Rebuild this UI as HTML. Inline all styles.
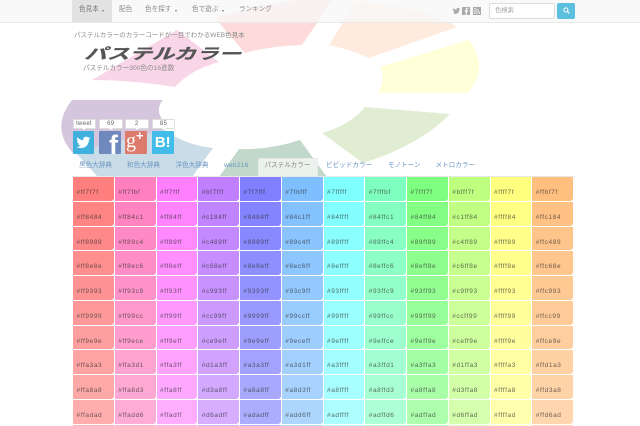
<!DOCTYPE html>
<html lang="ja"><head><meta charset="utf-8"><title>パステルカラー</title>
<style>
html,body{margin:0;padding:0;width:640px;height:426px;overflow:hidden;background:#fff}
body{position:relative;font-family:"Liberation Sans","Noto Sans CJK JP",sans-serif;color:#888}
#wrap{position:absolute;left:0;top:0;width:640px;height:426px;overflow:hidden;filter:blur(.3px)}
.a{position:absolute;white-space:nowrap;line-height:1}
#nav{position:absolute;left:0;top:0;width:640px;height:22px;background:rgba(248,248,248,.8);border-bottom:1px solid #e9e9e9}
#act{position:absolute;left:72px;top:0;width:40px;height:22px;background:#e2e2e2}
.n{font-size:6.6px;top:7px;color:#8a8a8a}
.car{position:absolute;top:10px;width:0;height:0;border:1.6px solid transparent;border-top:2px solid #777;border-bottom:0}
.b{position:absolute;top:119px;height:8px;background:#fff;border:.5px solid #ddd;border-radius:1px;font-size:6px;line-height:8px;text-align:center;color:#666;letter-spacing:.3px}
.b:after{content:"";position:absolute;left:50%;margin-left:-2px;bottom:-2px;border:2px solid transparent;border-top-color:#fff;border-bottom:0}
.s{position:absolute;top:131px;height:22.5px;border-radius:1px;color:#fff;text-align:center;overflow:hidden}
.t{font-size:6.6px;top:163px;color:#6d97c4}
#tab{position:absolute;left:258px;top:158px;width:60px;height:18px;background:rgba(240,244,240,.9);border:1px solid #e8e8e8;border-bottom:0;border-radius:2px 2px 0 0;box-sizing:border-box}
#line{position:absolute;left:73px;top:176px;width:501.5px;height:1px;background:#e8e8e8}
#g{position:absolute;left:73px;top:177px;height:249px;overflow:hidden;display:grid;grid-template-columns:repeat(12,41.75px);grid-auto-rows:24.75px}
#g i{display:block;position:relative;margin:0 1px 1px 0;font-style:normal;font-size:6.5px;letter-spacing:.6px;line-height:7px;padding:12px 0 0 3.5px;color:rgba(50,50,50,.72);overflow:hidden;box-sizing:border-box}
#g i:after{content:"";position:absolute;right:0;bottom:0;border-style:solid;border-width:0 0 2px 2px;border-color:transparent transparent #fff transparent}
</style></head><body>
<div id="wrap">
<svg class="bg" width="640" height="180" viewBox="0 0 640 180" style="position:absolute;left:0;top:0">
<path fill="#fddbdb" d="M215 18Q270 0 335 -3L302 45Q270 46 245 53Z"/>
<path fill="#ffebdd" d="M329 45L355 3Q420 5 457 27L369 58Q352 50 329 45Z"/>
<path fill="#ffffd8" d="M380 67L469 40Q490 70 467 93L378 93Q386 80 380 67Z"/>
<path fill="#e1edd2" d="M365 107L450 114Q420 145 363 163L322 133Q350 125 365 107Z"/>
<path fill="#c2d8ca" d="M239 149Q270 150 300 140L327 177L219 177Z"/>
<path fill="#cadce7" d="M73 150L98 177L192 177L213 148Q185 145 165 130L120 130Z"/>
<path fill="#d5c6dd" d="M72 100L163 100Q152 112 170 128L73 153Q50 128 72 100Z"/>
<path fill="#f9d5e8" d="M92 80L177 30L219 62Q190 70 175 87Q130 80 92 80Z"/>
</svg>
<div id="nav"></div><div id="act"></div>
<div class="a n" style="left:79px;color:#777">色見本</div><span class="car" style="left:102px"></span>
<div class="a n" style="left:119px">配色</div>
<div class="a n" style="left:145px">色を探す</div><span class="car" style="left:175px"></span>
<div class="a n" style="left:192px">色で遊ぶ</div><span class="car" style="left:222px"></span>
<div class="a n" style="left:239px">ランキング</div>
<svg width="9" height="8" viewBox="0 0 24 24" style="position:absolute;left:452px;top:7px"><path fill="#aaa" d="M23 4.9c-.8.4-1.7.6-2.6.7.9-.6 1.6-1.4 2-2.5-.9.5-1.9.9-2.9 1.1A4.6 4.6 0 0 0 11.6 8.4 13 13 0 0 1 2.2 3.6a4.6 4.6 0 0 0 1.4 6.1c-.7 0-1.4-.2-2-.6 0 2.2 1.6 4.1 3.7 4.6-.7.2-1.4.2-2.1.1.6 1.9 2.3 3.2 4.3 3.2A9.2 9.2 0 0 1 .7 18.9 13 13 0 0 0 7.7 21c8.5 0 13.3-7.2 13-13.6.9-.7 1.7-1.5 2.3-2.5z"/></svg>
<svg width="8" height="8" viewBox="0 0 8 8" style="position:absolute;left:462px;top:7px"><rect width="8" height="8" fill="#aaa"/><path fill="#f8f8f8" d="M5 8V4.6h1.1l.2-1.3H5v-.8c0-.4.1-.6.6-.6h.7V.8C6 .8 5.700 .7 5.300 .7 4.300 .7 3.700 1.300 3.700 2.300v1H2.600v1.300h1.100V8z"/></svg>
<svg width="8" height="8" viewBox="0 0 8 8" style="position:absolute;left:473px;top:7px"><rect width="8" height="8" fill="#aaa"/><circle cx="1.800" cy="6.200" r=".8" fill="#f8f8f8"/><path fill="none" stroke="#f8f8f8" stroke-width=".8" d="M1 3.700A3.300 3.300 0 0 1 4.300 7M1 1.600A5.400 5.400 0 0 1 6.400 7"/></svg>
<div style="position:absolute;left:489px;top:3px;width:66px;height:15.500px;background:#fff;border:.5px solid #ddd;border-radius:2px;box-sizing:border-box"></div>
<div class="a" style="left:495px;top:7.500px;font-size:6.300px;color:#a5a5a5">色検索</div>
<div style="position:absolute;left:557px;top:3px;width:18px;height:15.500px;background:#5bc0de;border-radius:2px"></div>
<svg width="7" height="7" viewBox="0 0 7 7" style="position:absolute;left:562.500px;top:7px"><circle cx="2.900" cy="2.900" r="2" fill="none" stroke="#fff" stroke-width="1"/><path d="M4.400 4.400L6.300 6.300" stroke="#fff" stroke-width="1.200"/></svg>
<div class="a" style="left:74px;top:33px;font-size:6.500px;color:#8c8c8c">パステルカラーのカラーコードが一目でわかるWEB色見本</div>
<div class="a" style="left:83px;top:47px;font-size:15px;font-weight:700;color:#555;-webkit-text-stroke:.3px #555;transform-origin:0 100%;transform:skewX(-22deg) scale(1.500,1)">パステルカラー</div>
<div class="a" style="left:83px;top:65.500px;font-size:6.650px;color:#8c8c8c">パステルカラー300色の16進数</div>
<div class="b" style="left:72.500px;width:21px">tweet</div>
<div class="b" style="left:99px;width:21.500px">69</div>
<div class="b" style="left:125px;width:21.500px">2</div>
<div class="b" style="left:152px;width:21px">85</div>
<div class="s" style="left:72.500px;width:21.500px;background:#3fb1dc"><svg width="15" height="15" viewBox="0 0 24 24" style="margin-top:4px"><path fill="#fff" d="M23 4.900c-.8.400-1.700.600-2.600.700.900-.600 1.600-1.400 2-2.500-.9.500-1.900.900-2.900 1.100A4.600 4.600 0 0 0 11.600 8.400 13 13 0 0 1 2.200 3.600a4.600 4.600 0 0 0 1.400 6.100c-.7 0-1.400-.2-2-.6 0 2.200 1.600 4.100 3.700 4.600-.7.200-1.400.2-2.100.1.600 1.900 2.300 3.200 4.300 3.200A9.200 9.200 0 0 1 .7 18.900 13 13 0 0 0 7.700 21c8.500 0 13.300-7.200 13-13.600.9-.7 1.700-1.500 2.300-2.500z"/></svg></div>
<div class="s" style="left:99px;width:22px;background:#6f88bd;font:700 27px/29px 'Liberation Sans',sans-serif;text-indent:7px">f</div>
<div class="s" style="left:125px;width:22px;background:#dc7a6b;text-align:left"><span style="position:absolute;left:1px;top:0;font:400 20px/20px 'Liberation Serif',serif">g</span><span style="position:absolute;left:11px;top:-2px;font:700 13px/13px 'Liberation Sans',sans-serif">+</span></div>
<div class="s" style="left:152px;width:21.500px;background:#42bdea;font:700 15px/23px 'Liberation Sans',sans-serif">B!</div>
<div id="tab"></div>
<div class="a t" style="left:79px">黒色大辞典</div>
<div class="a t" style="left:127px">和色大辞典</div>
<div class="a t" style="left:175.500px">洋色大辞典</div>
<div class="a t" style="left:224px;letter-spacing:.25px">web216</div>
<div class="a t" style="left:264.500px;color:#888">パステルカラー</div>
<div class="a t" style="left:326px">ビビッドカラー</div>
<div class="a t" style="left:388px">モノトーン</div>
<div class="a t" style="left:435.500px">メトロカラー</div>
<div id="line"></div>
<div id="g">
<i style="background:#ff7f7f">#ff7f7f</i><i style="background:#ff7fbf">#ff7fbf</i><i style="background:#ff7fff">#ff7fff</i><i style="background:#bf7fff">#bf7fff</i><i style="background:#7f7fff">#7f7fff</i><i style="background:#7fbfff">#7fbfff</i><i style="background:#7fffff">#7fffff</i><i style="background:#7fffbf">#7fffbf</i><i style="background:#7fff7f">#7fff7f</i><i style="background:#bfff7f">#bfff7f</i><i style="background:#ffff7f">#ffff7f</i><i style="background:#ffbf7f">#ffbf7f</i>
<i style="background:#ff8484">#ff8484</i><i style="background:#ff84c1">#ff84c1</i><i style="background:#ff84ff">#ff84ff</i><i style="background:#c184ff">#c184ff</i><i style="background:#8484ff">#8484ff</i><i style="background:#84c1ff">#84c1ff</i><i style="background:#84ffff">#84ffff</i><i style="background:#84ffc1">#84ffc1</i><i style="background:#84ff84">#84ff84</i><i style="background:#c1ff84">#c1ff84</i><i style="background:#ffff84">#ffff84</i><i style="background:#ffc184">#ffc184</i>
<i style="background:#ff8989">#ff8989</i><i style="background:#ff89c4">#ff89c4</i><i style="background:#ff89ff">#ff89ff</i><i style="background:#c489ff">#c489ff</i><i style="background:#8989ff">#8989ff</i><i style="background:#89c4ff">#89c4ff</i><i style="background:#89ffff">#89ffff</i><i style="background:#89ffc4">#89ffc4</i><i style="background:#89ff89">#89ff89</i><i style="background:#c4ff89">#c4ff89</i><i style="background:#ffff89">#ffff89</i><i style="background:#ffc489">#ffc489</i>
<i style="background:#ff8e8e">#ff8e8e</i><i style="background:#ff8ec6">#ff8ec6</i><i style="background:#ff8eff">#ff8eff</i><i style="background:#c68eff">#c68eff</i><i style="background:#8e8eff">#8e8eff</i><i style="background:#8ec6ff">#8ec6ff</i><i style="background:#8effff">#8effff</i><i style="background:#8effc6">#8effc6</i><i style="background:#8eff8e">#8eff8e</i><i style="background:#c6ff8e">#c6ff8e</i><i style="background:#ffff8e">#ffff8e</i><i style="background:#ffc68e">#ffc68e</i>
<i style="background:#ff9393">#ff9393</i><i style="background:#ff93c9">#ff93c9</i><i style="background:#ff93ff">#ff93ff</i><i style="background:#c993ff">#c993ff</i><i style="background:#9393ff">#9393ff</i><i style="background:#93c9ff">#93c9ff</i><i style="background:#93ffff">#93ffff</i><i style="background:#93ffc9">#93ffc9</i><i style="background:#93ff93">#93ff93</i><i style="background:#c9ff93">#c9ff93</i><i style="background:#ffff93">#ffff93</i><i style="background:#ffc993">#ffc993</i>
<i style="background:#ff9999">#ff9999</i><i style="background:#ff99cc">#ff99cc</i><i style="background:#ff99ff">#ff99ff</i><i style="background:#cc99ff">#cc99ff</i><i style="background:#9999ff">#9999ff</i><i style="background:#99ccff">#99ccff</i><i style="background:#99ffff">#99ffff</i><i style="background:#99ffcc">#99ffcc</i><i style="background:#99ff99">#99ff99</i><i style="background:#ccff99">#ccff99</i><i style="background:#ffff99">#ffff99</i><i style="background:#ffcc99">#ffcc99</i>
<i style="background:#ff9e9e">#ff9e9e</i><i style="background:#ff9ece">#ff9ece</i><i style="background:#ff9eff">#ff9eff</i><i style="background:#ce9eff">#ce9eff</i><i style="background:#9e9eff">#9e9eff</i><i style="background:#9eceff">#9eceff</i><i style="background:#9effff">#9effff</i><i style="background:#9effce">#9effce</i><i style="background:#9eff9e">#9eff9e</i><i style="background:#ceff9e">#ceff9e</i><i style="background:#ffff9e">#ffff9e</i><i style="background:#ffce9e">#ffce9e</i>
<i style="background:#ffa3a3">#ffa3a3</i><i style="background:#ffa3d1">#ffa3d1</i><i style="background:#ffa3ff">#ffa3ff</i><i style="background:#d1a3ff">#d1a3ff</i><i style="background:#a3a3ff">#a3a3ff</i><i style="background:#a3d1ff">#a3d1ff</i><i style="background:#a3ffff">#a3ffff</i><i style="background:#a3ffd1">#a3ffd1</i><i style="background:#a3ffa3">#a3ffa3</i><i style="background:#d1ffa3">#d1ffa3</i><i style="background:#ffffa3">#ffffa3</i><i style="background:#ffd1a3">#ffd1a3</i>
<i style="background:#ffa8a8">#ffa8a8</i><i style="background:#ffa8d3">#ffa8d3</i><i style="background:#ffa8ff">#ffa8ff</i><i style="background:#d3a8ff">#d3a8ff</i><i style="background:#a8a8ff">#a8a8ff</i><i style="background:#a8d3ff">#a8d3ff</i><i style="background:#a8ffff">#a8ffff</i><i style="background:#a8ffd3">#a8ffd3</i><i style="background:#a8ffa8">#a8ffa8</i><i style="background:#d3ffa8">#d3ffa8</i><i style="background:#ffffa8">#ffffa8</i><i style="background:#ffd3a8">#ffd3a8</i>
<i style="background:#ffadad">#ffadad</i><i style="background:#ffadd6">#ffadd6</i><i style="background:#ffadff">#ffadff</i><i style="background:#d6adff">#d6adff</i><i style="background:#adadff">#adadff</i><i style="background:#add6ff">#add6ff</i><i style="background:#adffff">#adffff</i><i style="background:#adffd6">#adffd6</i><i style="background:#adffad">#adffad</i><i style="background:#d6ffad">#d6ffad</i><i style="background:#ffffad">#ffffad</i><i style="background:#ffd6ad">#ffd6ad</i>
<i style="background:#ffb2b2">#ffb2b2</i><i style="background:#ffb2d8">#ffb2d8</i><i style="background:#ffb2ff">#ffb2ff</i><i style="background:#d8b2ff">#d8b2ff</i><i style="background:#b2b2ff">#b2b2ff</i><i style="background:#b2d8ff">#b2d8ff</i><i style="background:#b2ffff">#b2ffff</i><i style="background:#b2ffd8">#b2ffd8</i><i style="background:#b2ffb2">#b2ffb2</i><i style="background:#d8ffb2">#d8ffb2</i><i style="background:#ffffb2">#ffffb2</i><i style="background:#ffd8b2">#ffd8b2</i>
</div>
</div>
</body></html>
